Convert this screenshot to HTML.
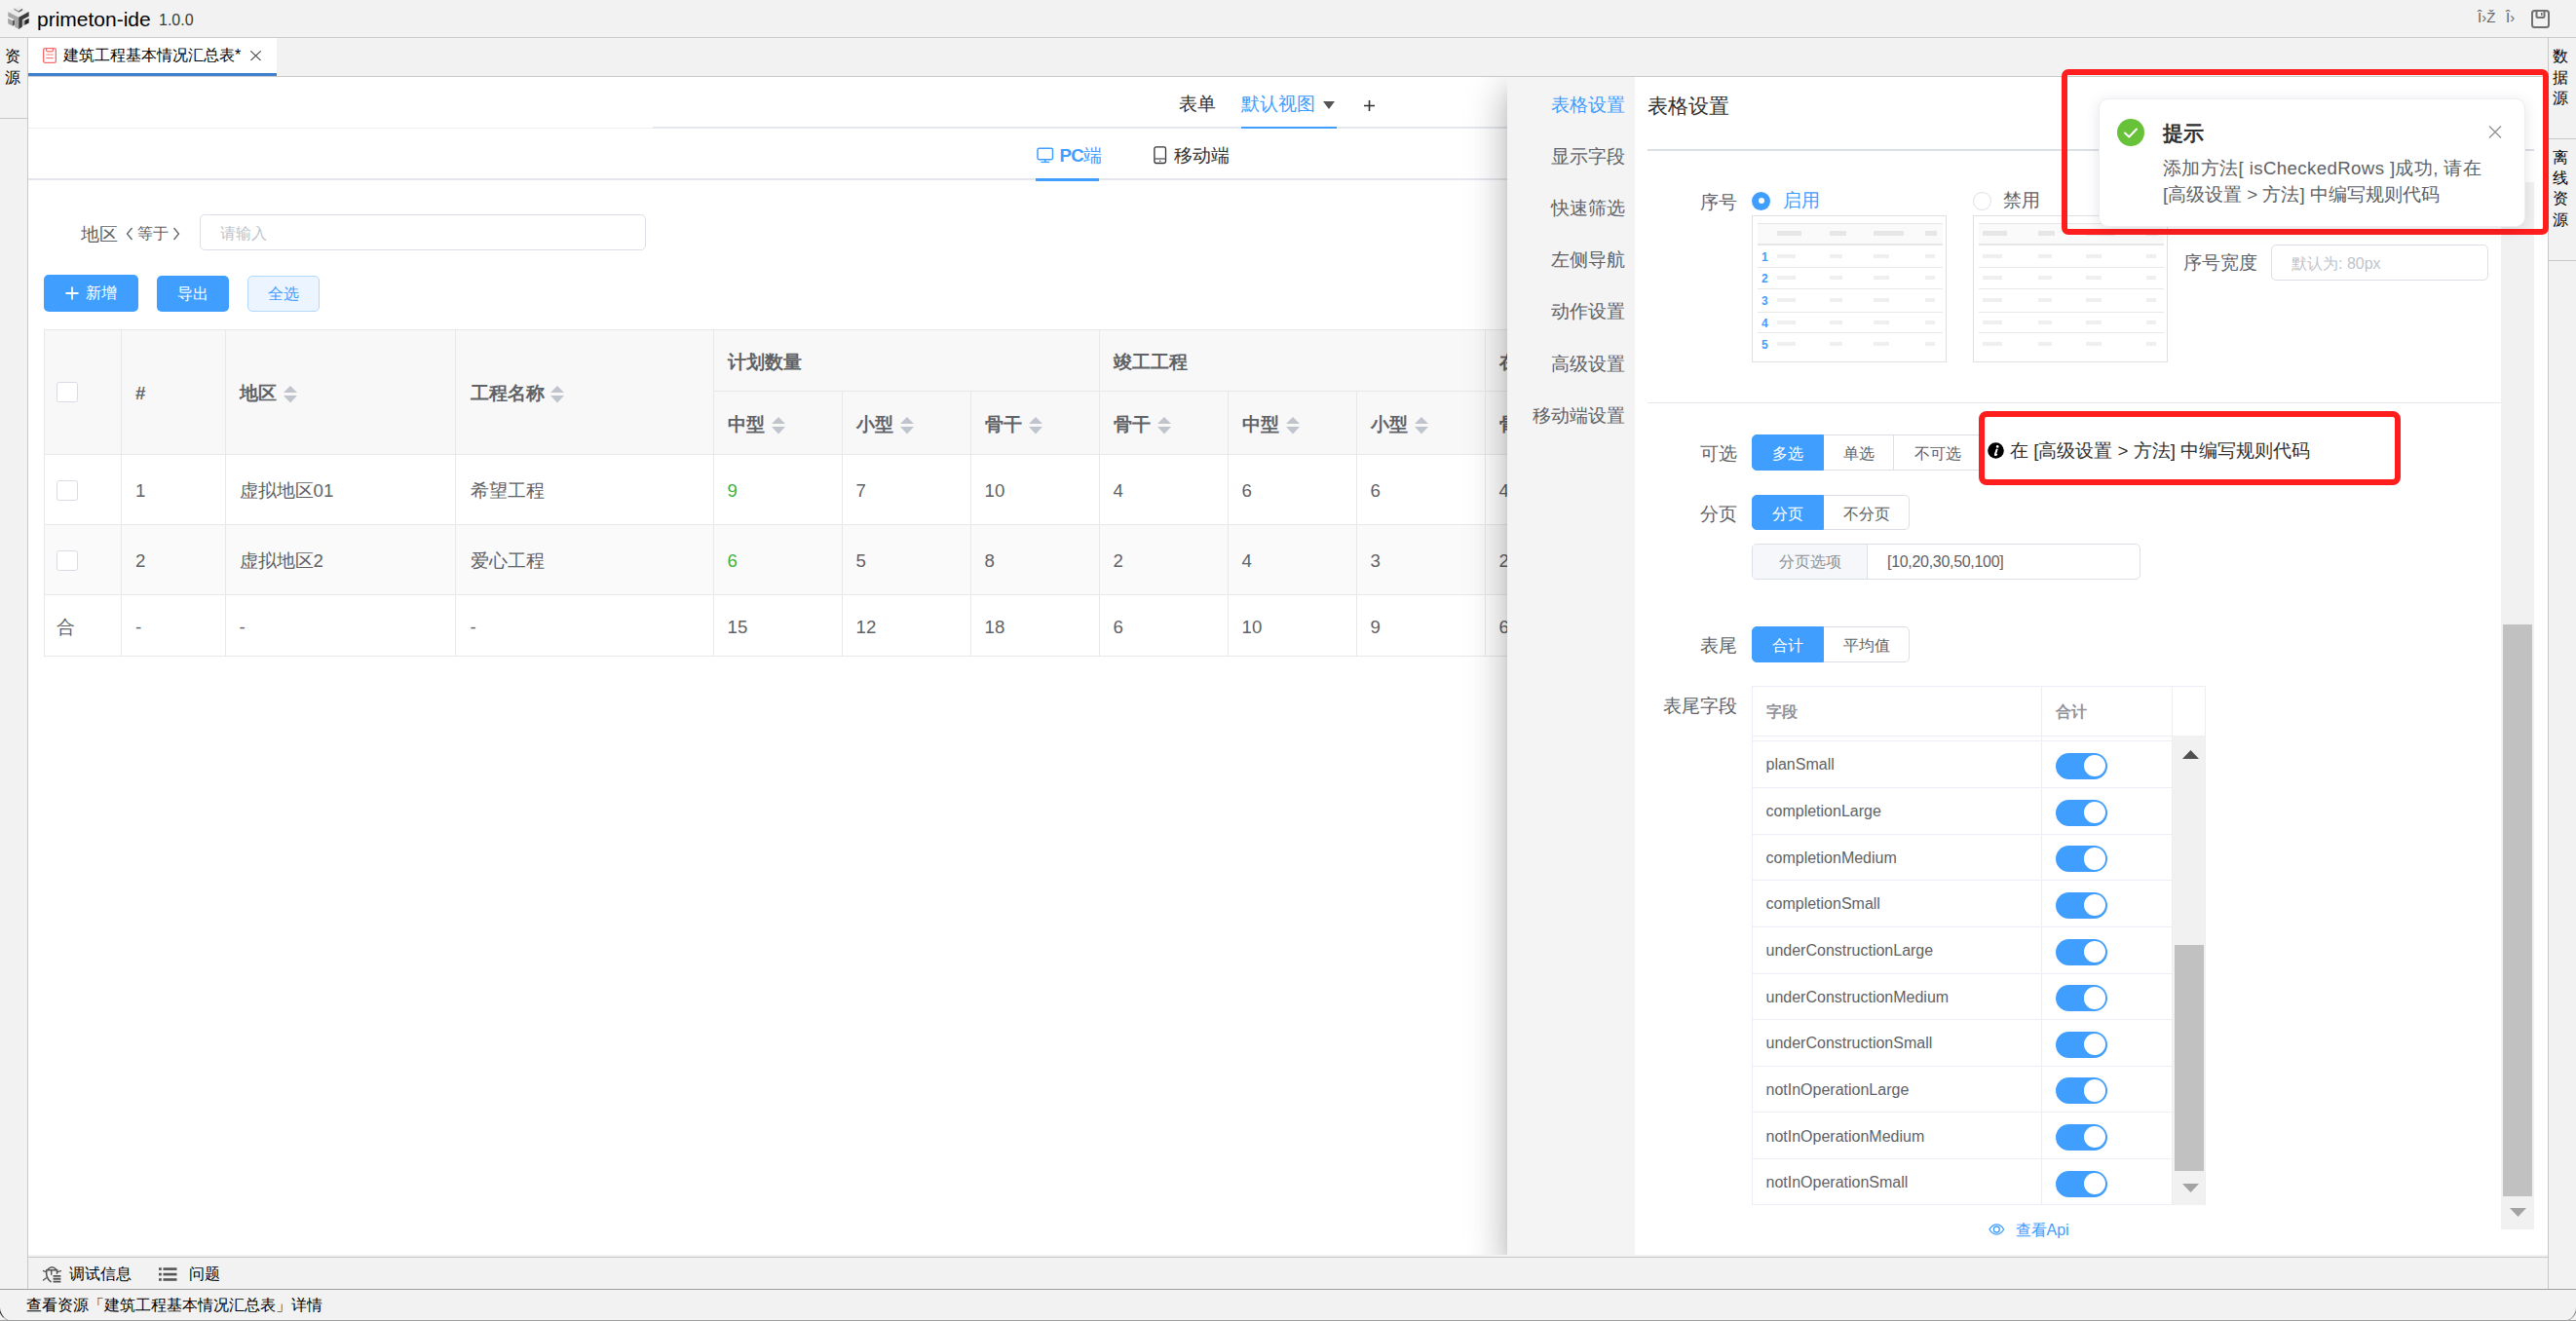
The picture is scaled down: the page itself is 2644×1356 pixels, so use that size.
<!DOCTYPE html><html><head><meta charset="utf-8"><title>primeton-ide</title><style>
*{box-sizing:border-box;margin:0;padding:0}
html,body{width:2644px;height:1356px;overflow:hidden}
body{position:relative;background:#f2f2f2;font-family:"Liberation Sans",sans-serif;color:#606266}
.ab{position:absolute}
.t{position:absolute;white-space:nowrap}
</style></head><body>
<div class="ab" style="left:0px;top:0px;width:2644px;height:38px;background:#f2f2f2"></div>
<div class="ab" style="left:0px;top:38px;width:2644px;height:1px;background:#cbcbcb"></div>
<svg class="ab" style="left:4px;top:4px" width="32" height="30" viewBox="0 0 1409 1321">
<polygon points="190,360 670,95 1130,350 670,610" fill="#ebebeb"/>
<polygon points="450,190 670,320 670,390 470,270" fill="#9a9a9a"/>
<polygon points="670,320 840,210 840,290 670,390" fill="#555"/>
<polygon points="190,360 670,610 670,1140 490,1040 490,720 190,570" fill="#a6a6a6"/>
<polygon points="185,650 400,760 400,1000 185,890" fill="#a3a3a3"/>
<polygon points="400,760 480,720 480,950 400,1000" fill="#4a4a4a"/>
<polygon points="670,610 1130,350 1130,560 830,720 830,1040 670,1140" fill="#3a3a3a"/>
<polygon points="850,700 940,750 940,960 850,1000" fill="#a8a8a8"/>
<polygon points="940,750 1130,650 1130,860 940,960" fill="#222"/>
</svg>
<div class="t" style="left:38px;top:3.8px;font-size:21px;line-height:32px;color:#000;font-weight:normal;">primeton-ide</div>
<div class="t" style="left:163px;top:9.3px;font-size:16px;line-height:24px;color:#3a3a3a;font-weight:normal;">1.0.0</div>
<div class="t" style="left:2543px;top:6.5px;font-size:15px;line-height:22px;color:#666;font-weight:normal;">Î›Ž</div>
<div class="t" style="left:2572px;top:6.5px;font-size:15px;line-height:22px;color:#666;font-weight:normal;">Î›</div>
<svg class="ab" style="left:2598px;top:10px" width="19" height="19" viewBox="0 0 19 19">
<rect x="1" y="1" width="17" height="17" rx="2.5" fill="none" stroke="#707070" stroke-width="2"/>
<path d="M5.5 1.5 V6.5 Q5.5 8 7 8 H12 Q13.5 8 13.5 6.5 V1.5" fill="none" stroke="#707070" stroke-width="2"/>
<rect x="10" y="3" width="1.5" height="3" fill="#707070"/>
</svg>
<div class="ab" style="left:28px;top:39px;width:1px;height:1284px;background:#c8c8c8"></div>
<div class="ab" style="left:0px;top:121px;width:28px;height:1px;background:#c8c8c8"></div>
<div class="t" style="left:5px;top:46.0px;font-size:16px;line-height:24px;color:#000;font-weight:normal;">资</div>
<div class="t" style="left:5px;top:67.5px;font-size:16px;line-height:24px;color:#000;font-weight:normal;">源</div>
<div class="ab" style="left:2615px;top:39px;width:1px;height:1284px;background:#c8c8c8"></div>
<div class="ab" style="left:2616px;top:142px;width:28px;height:1px;background:#c8c8c8"></div>
<div class="ab" style="left:2616px;top:267px;width:28px;height:1px;background:#c8c8c8"></div>
<div class="t" style="left:2620px;top:46.0px;font-size:16px;line-height:24px;color:#000;font-weight:normal;">数</div>
<div class="t" style="left:2620px;top:67.5px;font-size:16px;line-height:24px;color:#000;font-weight:normal;">据</div>
<div class="t" style="left:2620px;top:89.0px;font-size:16px;line-height:24px;color:#000;font-weight:normal;">源</div>
<div class="t" style="left:2620px;top:150.0px;font-size:16px;line-height:24px;color:#000;font-weight:normal;">离</div>
<div class="t" style="left:2620px;top:171.2px;font-size:16px;line-height:24px;color:#000;font-weight:normal;">线</div>
<div class="t" style="left:2620px;top:192.4px;font-size:16px;line-height:24px;color:#000;font-weight:normal;">资</div>
<div class="t" style="left:2620px;top:213.6px;font-size:16px;line-height:24px;color:#000;font-weight:normal;">源</div>
<div class="ab" style="left:29px;top:39px;width:2586px;height:40px;background:#f2f2f2"></div>
<div class="ab" style="left:29px;top:78px;width:2586px;height:1px;background:#c9c9c9"></div>
<div class="ab" style="left:29px;top:39px;width:255px;height:39px;background:#fff"></div>
<div class="ab" style="left:29px;top:75px;width:255px;height:3px;background:#3d80cf"></div>
<svg class="ab" style="left:44px;top:49px" width="14" height="16" viewBox="0 0 14 16">
<rect x="0.65" y="0.65" width="12.7" height="14.7" rx="1.6" fill="none" stroke="#f56c6c" stroke-width="1.3"/>
<path d="M3.6 0.8 V2.5 Q3.6 3.8 4.9 3.8 H9.1 Q10.4 3.8 10.4 2.5 V0.8" fill="none" stroke="#f56c6c" stroke-width="1.2"/>
<line x1="3.3" y1="7.1" x2="10.7" y2="7.1" stroke="#f89a9a" stroke-width="1.3"/>
<line x1="3.3" y1="10.6" x2="10.7" y2="10.6" stroke="#f56c6c" stroke-width="1.1"/>
</svg>
<div class="t" style="left:65px;top:44.5px;font-size:16px;line-height:24px;color:#000;font-weight:normal;">建筑工程基本情况汇总表*</div>
<svg class="ab" style="left:257px;top:51.5px" width="11" height="10.5" viewBox="0 0 11 10.5">
<path d="M0.3 0.3 L10.7 10.2 M10.7 0.3 L0.3 10.2" stroke="#444" stroke-width="1.05"/></svg>
<div class="ab" style="left:29px;top:79px;width:2586px;height:1209px;background:#fff"></div>
<div class="ab" style="left:29px;top:131px;width:641px;height:1px;background:#f3eef0"></div>
<div class="ab" style="left:670px;top:130px;width:877px;height:2px;background:#e4e7ed"></div>
<div class="t" style="left:1210px;top:93.3px;font-size:18.67px;line-height:28px;color:#303133;font-weight:normal;">表单</div>
<div class="t" style="left:1274px;top:93.3px;font-size:18.67px;line-height:28px;color:#409eff;font-weight:normal;">默认视图</div>
<svg class="ab" style="left:1358px;top:104px" width="12" height="8" viewBox="0 0 12 8"><polygon points="0,0 12,0 6,8" fill="#555"/></svg>
<svg class="ab" style="left:1400px;top:103px" width="11" height="11" viewBox="0 0 11 11"><path d="M5.5 0V11M0 5.5H11" stroke="#303133" stroke-width="1.6"/></svg>
<div class="ab" style="left:1274px;top:130px;width:98px;height:2px;background:#409eff"></div>
<div class="ab" style="left:29px;top:183px;width:1518px;height:2px;background:#e4e7ed"></div>
<div class="ab" style="left:1063px;top:183px;width:65px;height:3px;background:#409eff"></div>
<svg class="ab" style="left:1064px;top:151px" width="18" height="17" viewBox="0 0 18 17">
<rect x="1" y="1.3" width="15.5" height="11.4" rx="1.6" fill="none" stroke="#409eff" stroke-width="1.5"/>
<line x1="8.75" y1="12.7" x2="8.75" y2="15.3" stroke="#409eff" stroke-width="1.4"/>
<line x1="4.3" y1="15.4" x2="13.2" y2="15.4" stroke="#409eff" stroke-width="1.4"/></svg>
<div class="t" style="left:1087.5px;top:145.8px;font-size:18.67px;line-height:28px;color:#409eff;font-weight:normal;"><b style="letter-spacing:-0.6px">PC</b>端</div>
<svg class="ab" style="left:1184px;top:150px" width="14" height="19" viewBox="0 0 14 19">
<rect x="0.9" y="0.9" width="11.6" height="16.6" rx="1.8" fill="none" stroke="#303133" stroke-width="1.3"/>
<line x1="1" y1="13" x2="12.4" y2="13" stroke="#606266" stroke-width="1.4"/>
<circle cx="6.7" cy="15.3" r="0.75" fill="#303133"/></svg>
<div class="t" style="left:1205px;top:145.8px;font-size:18.67px;line-height:28px;color:#303133;font-weight:normal;">移动端</div>
<div class="t" style="left:83px;top:226.8px;font-size:18.67px;line-height:28px;color:#606266;font-weight:normal;">地区</div>
<svg class="ab" style="left:129px;top:233px" width="8" height="14" viewBox="0 0 8 14"><path d="M6.5 1 L1.5 7 L6.5 13" fill="none" stroke="#606266" stroke-width="1.3"/></svg>
<div class="t" style="left:141px;top:228.0px;font-size:16px;line-height:24px;color:#606266;font-weight:normal;">等于</div>
<svg class="ab" style="left:177px;top:233px" width="8" height="14" viewBox="0 0 8 14"><path d="M1.5 1 L6.5 7 L1.5 13" fill="none" stroke="#606266" stroke-width="1.3"/></svg>
<div class="ab" style="left:205px;top:220px;width:458px;height:37px;border:1px solid #dcdfe6;border-radius:5px;background:#fff"></div>
<div class="t" style="left:226px;top:227.5px;font-size:16px;line-height:24px;color:#c0c4cc;font-weight:normal;">请输入</div>
<div class="ab" style="left:45px;top:282px;width:97px;height:38px;background:#409eff;border-radius:5px"></div>
<svg class="ab" style="left:67px;top:294px" width="14" height="14" viewBox="0 0 14 14"><path d="M7 0.5V13.5M0.5 7H13.5" stroke="#fff" stroke-width="1.8"/></svg>
<div class="t" style="left:88px;top:289.0px;font-size:16px;line-height:24px;color:#fff;font-weight:normal;">新增</div>
<div class="ab" style="left:161px;top:283px;width:74px;height:37px;background:#409eff;border-radius:5px"></div>
<div class="t" style="left:182px;top:289.5px;font-size:16px;line-height:24px;color:#fff;font-weight:normal;">导出</div>
<div class="ab" style="left:254px;top:283px;width:74px;height:37px;background:#ecf5ff;border:1px solid #b3d8ff;border-radius:5px"></div>
<div class="t" style="left:275px;top:289.5px;font-size:16px;line-height:24px;color:#409eff;font-weight:normal;">全选</div>
<div class="ab" style="left:45px;top:338px;width:1502px;height:128px;background:#f8f8f8"></div>
<div class="ab" style="left:45px;top:538px;width:1502px;height:72px;background:#fafafa"></div>
<div class="ab" style="left:45px;top:338px;width:1502px;height:1px;background:#e8e8e8"></div>
<div class="ab" style="left:732px;top:401px;width:815px;height:1px;background:#e8e8e8"></div>
<div class="ab" style="left:45px;top:466px;width:1502px;height:1px;background:#e8e8e8"></div>
<div class="ab" style="left:45px;top:538px;width:1502px;height:1px;background:#e8e8e8"></div>
<div class="ab" style="left:45px;top:610px;width:1502px;height:1px;background:#e8e8e8"></div>
<div class="ab" style="left:45px;top:673px;width:1502px;height:1px;background:#e8e8e8"></div>
<div class="ab" style="left:45px;top:338px;width:1px;height:336px;background:#e8e8e8"></div>
<div class="ab" style="left:124px;top:338px;width:1px;height:336px;background:#e8e8e8"></div>
<div class="ab" style="left:231px;top:338px;width:1px;height:336px;background:#e8e8e8"></div>
<div class="ab" style="left:467px;top:338px;width:1px;height:336px;background:#e8e8e8"></div>
<div class="ab" style="left:732px;top:338px;width:1px;height:336px;background:#e8e8e8"></div>
<div class="ab" style="left:864px;top:401px;width:1px;height:273px;background:#e8e8e8"></div>
<div class="ab" style="left:996px;top:401px;width:1px;height:273px;background:#e8e8e8"></div>
<div class="ab" style="left:1260px;top:401px;width:1px;height:273px;background:#e8e8e8"></div>
<div class="ab" style="left:1392px;top:401px;width:1px;height:273px;background:#e8e8e8"></div>
<div class="ab" style="left:1128px;top:338px;width:1px;height:336px;background:#e8e8e8"></div>
<div class="ab" style="left:1524px;top:338px;width:1px;height:336px;background:#e8e8e8"></div>
<div class="ab" style="left:58px;top:392px;width:21.5px;height:20.8px;border:1.8px solid #d9dce3;border-radius:2.5px;background:#fff"></div>
<div class="t" style="left:139px;top:390.3px;font-size:18.67px;line-height:28px;color:#606266;font-weight:bold;">#</div>
<div class="t" style="left:245.5px;top:390.3px;font-size:18.67px;line-height:28px;color:#606266;font-weight:bold;">地区</div>
<svg class="ab" style="left:291px;top:396px" width="14" height="18" viewBox="0 0 14 18"><polygon points="7,0 14,7 0,7" fill="#c0c4cc"/><polygon points="0,10 14,10 7,17.5" fill="#c0c4cc"/></svg>
<div class="t" style="left:482.5px;top:390.3px;font-size:18.67px;line-height:28px;color:#606266;font-weight:bold;">工程名称</div>
<svg class="ab" style="left:565px;top:396px" width="14" height="18" viewBox="0 0 14 18"><polygon points="7,0 14,7 0,7" fill="#c0c4cc"/><polygon points="0,10 14,10 7,17.5" fill="#c0c4cc"/></svg>
<div class="t" style="left:746.5px;top:357.8px;font-size:18.67px;line-height:28px;color:#606266;font-weight:bold;">计划数量</div>
<div class="t" style="left:1142.5px;top:357.8px;font-size:18.67px;line-height:28px;color:#606266;font-weight:bold;">竣工工程</div>
<div class="t" style="left:1538.5px;top:357.8px;font-size:18.67px;line-height:28px;color:#606266;font-weight:bold;">在建工程</div>
<div class="t" style="left:746.5px;top:422.3px;font-size:18.67px;line-height:28px;color:#606266;font-weight:bold;">中型</div>
<svg class="ab" style="left:792px;top:428px" width="14" height="18" viewBox="0 0 14 18"><polygon points="7,0 14,7 0,7" fill="#c0c4cc"/><polygon points="0,10 14,10 7,17.5" fill="#c0c4cc"/></svg>
<div class="t" style="left:878.5px;top:422.3px;font-size:18.67px;line-height:28px;color:#606266;font-weight:bold;">小型</div>
<svg class="ab" style="left:924px;top:428px" width="14" height="18" viewBox="0 0 14 18"><polygon points="7,0 14,7 0,7" fill="#c0c4cc"/><polygon points="0,10 14,10 7,17.5" fill="#c0c4cc"/></svg>
<div class="t" style="left:1010.5px;top:422.3px;font-size:18.67px;line-height:28px;color:#606266;font-weight:bold;">骨干</div>
<svg class="ab" style="left:1056px;top:428px" width="14" height="18" viewBox="0 0 14 18"><polygon points="7,0 14,7 0,7" fill="#c0c4cc"/><polygon points="0,10 14,10 7,17.5" fill="#c0c4cc"/></svg>
<div class="t" style="left:1142.5px;top:422.3px;font-size:18.67px;line-height:28px;color:#606266;font-weight:bold;">骨干</div>
<svg class="ab" style="left:1188px;top:428px" width="14" height="18" viewBox="0 0 14 18"><polygon points="7,0 14,7 0,7" fill="#c0c4cc"/><polygon points="0,10 14,10 7,17.5" fill="#c0c4cc"/></svg>
<div class="t" style="left:1274.5px;top:422.3px;font-size:18.67px;line-height:28px;color:#606266;font-weight:bold;">中型</div>
<svg class="ab" style="left:1320px;top:428px" width="14" height="18" viewBox="0 0 14 18"><polygon points="7,0 14,7 0,7" fill="#c0c4cc"/><polygon points="0,10 14,10 7,17.5" fill="#c0c4cc"/></svg>
<div class="t" style="left:1406.5px;top:422.3px;font-size:18.67px;line-height:28px;color:#606266;font-weight:bold;">小型</div>
<svg class="ab" style="left:1452px;top:428px" width="14" height="18" viewBox="0 0 14 18"><polygon points="7,0 14,7 0,7" fill="#c0c4cc"/><polygon points="0,10 14,10 7,17.5" fill="#c0c4cc"/></svg>
<div class="t" style="left:1538.5px;top:422.3px;font-size:18.67px;line-height:28px;color:#606266;font-weight:bold;">骨干</div>
<svg class="ab" style="left:1584px;top:428px" width="14" height="18" viewBox="0 0 14 18"><polygon points="7,0 14,7 0,7" fill="#c0c4cc"/><polygon points="0,10 14,10 7,17.5" fill="#c0c4cc"/></svg>
<div class="ab" style="left:58px;top:493px;width:21.5px;height:20.8px;border:1.8px solid #d9dce3;border-radius:2.5px;background:#fff"></div>
<div class="t" style="left:139px;top:490.0px;font-size:18.67px;line-height:28px;color:#606266;font-weight:normal;">1</div>
<div class="t" style="left:245.5px;top:490.0px;font-size:18.67px;line-height:28px;color:#606266;font-weight:normal;">虚拟地区01</div>
<div class="t" style="left:482.5px;top:490.0px;font-size:18.67px;line-height:28px;color:#606266;font-weight:normal;">希望工程</div>
<div class="t" style="left:746.5px;top:490.0px;font-size:18.67px;line-height:28px;color:#3eb33e;font-weight:normal;">9</div>
<div class="t" style="left:878.5px;top:490.0px;font-size:18.67px;line-height:28px;color:#606266;font-weight:normal;">7</div>
<div class="t" style="left:1010.5px;top:490.0px;font-size:18.67px;line-height:28px;color:#606266;font-weight:normal;">10</div>
<div class="t" style="left:1142.5px;top:490.0px;font-size:18.67px;line-height:28px;color:#606266;font-weight:normal;">4</div>
<div class="t" style="left:1274.5px;top:490.0px;font-size:18.67px;line-height:28px;color:#606266;font-weight:normal;">6</div>
<div class="t" style="left:1406.5px;top:490.0px;font-size:18.67px;line-height:28px;color:#606266;font-weight:normal;">6</div>
<div class="t" style="left:1538.5px;top:490.0px;font-size:18.67px;line-height:28px;color:#606266;font-weight:normal;">4</div>
<div class="ab" style="left:58px;top:565px;width:21.5px;height:20.8px;border:1.8px solid #d9dce3;border-radius:2.5px;background:#fff"></div>
<div class="t" style="left:139px;top:562.0px;font-size:18.67px;line-height:28px;color:#606266;font-weight:normal;">2</div>
<div class="t" style="left:245.5px;top:562.0px;font-size:18.67px;line-height:28px;color:#606266;font-weight:normal;">虚拟地区2</div>
<div class="t" style="left:482.5px;top:562.0px;font-size:18.67px;line-height:28px;color:#606266;font-weight:normal;">爱心工程</div>
<div class="t" style="left:746.5px;top:562.0px;font-size:18.67px;line-height:28px;color:#3eb33e;font-weight:normal;">6</div>
<div class="t" style="left:878.5px;top:562.0px;font-size:18.67px;line-height:28px;color:#606266;font-weight:normal;">5</div>
<div class="t" style="left:1010.5px;top:562.0px;font-size:18.67px;line-height:28px;color:#606266;font-weight:normal;">8</div>
<div class="t" style="left:1142.5px;top:562.0px;font-size:18.67px;line-height:28px;color:#606266;font-weight:normal;">2</div>
<div class="t" style="left:1274.5px;top:562.0px;font-size:18.67px;line-height:28px;color:#606266;font-weight:normal;">4</div>
<div class="t" style="left:1406.5px;top:562.0px;font-size:18.67px;line-height:28px;color:#606266;font-weight:normal;">3</div>
<div class="t" style="left:1538.5px;top:562.0px;font-size:18.67px;line-height:28px;color:#606266;font-weight:normal;">2</div>
<div class="t" style="left:58px;top:630.0px;font-size:18.67px;line-height:28px;color:#606266;font-weight:normal;">合</div>
<div class="t" style="left:139px;top:630.0px;font-size:18.67px;line-height:28px;color:#606266;font-weight:normal;">-</div>
<div class="t" style="left:245.5px;top:630.0px;font-size:18.67px;line-height:28px;color:#606266;font-weight:normal;">-</div>
<div class="t" style="left:482.5px;top:630.0px;font-size:18.67px;line-height:28px;color:#606266;font-weight:normal;">-</div>
<div class="t" style="left:746.5px;top:630.0px;font-size:18.67px;line-height:28px;color:#606266;font-weight:normal;">15</div>
<div class="t" style="left:878.5px;top:630.0px;font-size:18.67px;line-height:28px;color:#606266;font-weight:normal;">12</div>
<div class="t" style="left:1010.5px;top:630.0px;font-size:18.67px;line-height:28px;color:#606266;font-weight:normal;">18</div>
<div class="t" style="left:1142.5px;top:630.0px;font-size:18.67px;line-height:28px;color:#606266;font-weight:normal;">6</div>
<div class="t" style="left:1274.5px;top:630.0px;font-size:18.67px;line-height:28px;color:#606266;font-weight:normal;">10</div>
<div class="t" style="left:1406.5px;top:630.0px;font-size:18.67px;line-height:28px;color:#606266;font-weight:normal;">9</div>
<div class="t" style="left:1538.5px;top:630.0px;font-size:18.67px;line-height:28px;color:#606266;font-weight:normal;">6</div>
<div class="ab" style="left:1547px;top:79px;width:1068px;height:1209px;background:#fff;box-shadow:0 10px 14px -7px rgba(0,0,0,.2),0 21px 32px 3px rgba(0,0,0,.14),0 8px 40px 7px rgba(0,0,0,.12);clip-path:inset(0 0 0 -120px)"></div>
<div class="ab" style="left:1547px;top:79px;width:131px;height:1209px;background:#f4f4f5"></div>
<div class="t" style="left:1547px;width:121px;text-align:right;top:93.5px;font-size:18.67px;line-height:28px;color:#409eff">表格设置</div>
<div class="t" style="left:1547px;width:121px;text-align:right;top:146.8px;font-size:18.67px;line-height:28px;color:#606266">显示字段</div>
<div class="t" style="left:1547px;width:121px;text-align:right;top:200.0px;font-size:18.67px;line-height:28px;color:#606266">快速筛选</div>
<div class="t" style="left:1547px;width:121px;text-align:right;top:253.2px;font-size:18.67px;line-height:28px;color:#606266">左侧导航</div>
<div class="t" style="left:1547px;width:121px;text-align:right;top:306.4px;font-size:18.67px;line-height:28px;color:#606266">动作设置</div>
<div class="t" style="left:1547px;width:121px;text-align:right;top:359.6px;font-size:18.67px;line-height:28px;color:#606266">高级设置</div>
<div class="t" style="left:1547px;width:121px;text-align:right;top:412.8px;font-size:18.67px;line-height:28px;color:#606266">移动端设置</div>
<div class="t" style="left:1691px;top:93.0px;font-size:21.33px;line-height:32px;color:#303133;font-weight:normal;">表格设置</div>
<div class="ab" style="left:1691px;top:153px;width:910px;height:2px;background:#dcdfe6"></div>
<div class="ab" style="left:2567px;top:187px;width:34px;height:1075px;background:#f1f1f1"></div>
<div class="ab" style="left:2569px;top:641px;width:30px;height:587px;background:#c1c1c1"></div>
<svg class="ab" style="left:2576px;top:1240px" width="17" height="9" viewBox="0 0 17 9"><polygon points="0,0 17,0 8.5,9" fill="#a3a3a3"/></svg>
<div class="t" style="left:1744.5px;top:194.3px;font-size:18.67px;line-height:28px;color:#606266;font-weight:normal;">序号</div>
<div class="ab" style="left:1798px;top:196.5px;width:19px;height:19px;border-radius:50%;background:#409eff"></div>
<div class="ab" style="left:1804.5px;top:203px;width:6px;height:6px;border-radius:50%;background:#fff"></div>
<div class="t" style="left:1830px;top:192.2px;font-size:18.67px;line-height:28px;color:#409eff;font-weight:normal;">启用</div>
<div class="ab" style="left:2025px;top:196.5px;width:19px;height:19px;border-radius:50%;background:#fff;border:1px solid #dcdfe6"></div>
<div class="t" style="left:2056px;top:192.2px;font-size:18.67px;line-height:28px;color:#606266;font-weight:normal;">禁用</div>
<div class="ab" style="left:1798px;top:221px;width:200px;height:151px;border:1px solid #e0e0e0;background:#fff"></div>
<div class="ab" style="left:1804px;top:229px;width:190px;height:22px;background:#fafafa"></div>
<div class="ab" style="left:1804px;top:229px;width:190px;height:1px;background:#e6e6e6"></div>
<div class="ab" style="left:1804px;top:250px;width:190px;height:2px;background:#e6e6e6"></div>
<div class="ab" style="left:1804px;top:274px;width:190px;height:1px;background:#e8e8e8"></div>
<div class="ab" style="left:1804px;top:296px;width:190px;height:1px;background:#e8e8e8"></div>
<div class="ab" style="left:1804px;top:320px;width:190px;height:1px;background:#e8e8e8"></div>
<div class="ab" style="left:1804px;top:341px;width:190px;height:1px;background:#e8e8e8"></div>
<div class="ab" style="left:1824px;top:237px;width:25px;height:5px;background:#e6e6e6"></div>
<div class="ab" style="left:1877.5px;top:237px;width:17px;height:5px;background:#e6e6e6"></div>
<div class="ab" style="left:1923px;top:237px;width:31px;height:5px;background:#e6e6e6"></div>
<div class="ab" style="left:1976px;top:237px;width:12px;height:5px;background:#e6e6e6"></div>
<div class="ab" style="left:1824px;top:261px;width:19px;height:4px;background:#efefef"></div>
<div class="ab" style="left:1877.5px;top:261px;width:13.5px;height:4px;background:#efefef"></div>
<div class="ab" style="left:1923px;top:261px;width:16px;height:4px;background:#efefef"></div>
<div class="ab" style="left:1976px;top:261px;width:9.5px;height:4px;background:#efefef"></div>
<div class="t" style="left:1808px;top:254.5px;font-size:12px;line-height:18px;color:#409eff;font-weight:bold;">1</div>
<div class="ab" style="left:1824px;top:283px;width:19px;height:4px;background:#efefef"></div>
<div class="ab" style="left:1877.5px;top:283px;width:13.5px;height:4px;background:#efefef"></div>
<div class="ab" style="left:1923px;top:283px;width:16px;height:4px;background:#efefef"></div>
<div class="ab" style="left:1976px;top:283px;width:9.5px;height:4px;background:#efefef"></div>
<div class="t" style="left:1808px;top:277.2px;font-size:12px;line-height:18px;color:#409eff;font-weight:bold;">2</div>
<div class="ab" style="left:1824px;top:306px;width:19px;height:4px;background:#efefef"></div>
<div class="ab" style="left:1877.5px;top:306px;width:13.5px;height:4px;background:#efefef"></div>
<div class="ab" style="left:1923px;top:306px;width:16px;height:4px;background:#efefef"></div>
<div class="ab" style="left:1976px;top:306px;width:9.5px;height:4px;background:#efefef"></div>
<div class="t" style="left:1808px;top:300.0px;font-size:12px;line-height:18px;color:#409eff;font-weight:bold;">3</div>
<div class="ab" style="left:1824px;top:329px;width:19px;height:4px;background:#efefef"></div>
<div class="ab" style="left:1877.5px;top:329px;width:13.5px;height:4px;background:#efefef"></div>
<div class="ab" style="left:1923px;top:329px;width:16px;height:4px;background:#efefef"></div>
<div class="ab" style="left:1976px;top:329px;width:9.5px;height:4px;background:#efefef"></div>
<div class="t" style="left:1808px;top:322.5px;font-size:12px;line-height:18px;color:#409eff;font-weight:bold;">4</div>
<div class="ab" style="left:1824px;top:351px;width:19px;height:4px;background:#efefef"></div>
<div class="ab" style="left:1877.5px;top:351px;width:13.5px;height:4px;background:#efefef"></div>
<div class="ab" style="left:1923px;top:351px;width:16px;height:4px;background:#efefef"></div>
<div class="ab" style="left:1976px;top:351px;width:9.5px;height:4px;background:#efefef"></div>
<div class="t" style="left:1808px;top:345.2px;font-size:12px;line-height:18px;color:#409eff;font-weight:bold;">5</div>
<div class="ab" style="left:2025px;top:221px;width:200px;height:151px;border:1px solid #e0e0e0;background:#fff"></div>
<div class="ab" style="left:2031px;top:229px;width:190px;height:22px;background:#fafafa"></div>
<div class="ab" style="left:2031px;top:229px;width:190px;height:1px;background:#e6e6e6"></div>
<div class="ab" style="left:2031px;top:250px;width:190px;height:2px;background:#e6e6e6"></div>
<div class="ab" style="left:2031px;top:274px;width:190px;height:1px;background:#e8e8e8"></div>
<div class="ab" style="left:2031px;top:296px;width:190px;height:1px;background:#e8e8e8"></div>
<div class="ab" style="left:2031px;top:320px;width:190px;height:1px;background:#e8e8e8"></div>
<div class="ab" style="left:2031px;top:341px;width:190px;height:1px;background:#e8e8e8"></div>
<div class="ab" style="left:2035px;top:237px;width:25px;height:5px;background:#e6e6e6"></div>
<div class="ab" style="left:2092px;top:237px;width:17px;height:5px;background:#e6e6e6"></div>
<div class="ab" style="left:2141px;top:237px;width:30px;height:5px;background:#e6e6e6"></div>
<div class="ab" style="left:2203px;top:237px;width:12px;height:5px;background:#e6e6e6"></div>
<div class="ab" style="left:2035px;top:261px;width:19.5px;height:4px;background:#efefef"></div>
<div class="ab" style="left:2092px;top:261px;width:13.75px;height:4px;background:#efefef"></div>
<div class="ab" style="left:2141px;top:261px;width:15.75px;height:4px;background:#efefef"></div>
<div class="ab" style="left:2203px;top:261px;width:9.5px;height:4px;background:#efefef"></div>
<div class="ab" style="left:2035px;top:283px;width:19.5px;height:4px;background:#efefef"></div>
<div class="ab" style="left:2092px;top:283px;width:13.75px;height:4px;background:#efefef"></div>
<div class="ab" style="left:2141px;top:283px;width:15.75px;height:4px;background:#efefef"></div>
<div class="ab" style="left:2203px;top:283px;width:9.5px;height:4px;background:#efefef"></div>
<div class="ab" style="left:2035px;top:306px;width:19.5px;height:4px;background:#efefef"></div>
<div class="ab" style="left:2092px;top:306px;width:13.75px;height:4px;background:#efefef"></div>
<div class="ab" style="left:2141px;top:306px;width:15.75px;height:4px;background:#efefef"></div>
<div class="ab" style="left:2203px;top:306px;width:9.5px;height:4px;background:#efefef"></div>
<div class="ab" style="left:2035px;top:329px;width:19.5px;height:4px;background:#efefef"></div>
<div class="ab" style="left:2092px;top:329px;width:13.75px;height:4px;background:#efefef"></div>
<div class="ab" style="left:2141px;top:329px;width:15.75px;height:4px;background:#efefef"></div>
<div class="ab" style="left:2203px;top:329px;width:9.5px;height:4px;background:#efefef"></div>
<div class="ab" style="left:2035px;top:351px;width:19.5px;height:4px;background:#efefef"></div>
<div class="ab" style="left:2092px;top:351px;width:13.75px;height:4px;background:#efefef"></div>
<div class="ab" style="left:2141px;top:351px;width:15.75px;height:4px;background:#efefef"></div>
<div class="ab" style="left:2203px;top:351px;width:9.5px;height:4px;background:#efefef"></div>
<div class="t" style="left:2240.5px;top:256.3px;font-size:18.67px;line-height:28px;color:#606266;font-weight:normal;">序号宽度</div>
<div class="ab" style="left:2331px;top:250.5px;width:223px;height:37px;border:1px solid #dcdfe6;border-radius:5px;background:#fff"></div>
<div class="t" style="left:2352px;top:258.5px;font-size:16px;line-height:24px;color:#c0c4cc;font-weight:normal;">默认为: 80px</div>
<div class="ab" style="left:1691px;top:413px;width:876px;height:1px;background:#e4e7ed"></div>
<div class="t" style="left:1745px;top:451.8px;font-size:18.67px;line-height:28px;color:#606266;font-weight:normal;">可选</div>
<div class="ab" style="left:1798px;top:446px;width:74px;height:36.5px;background:#409eff;border:1px solid #409eff;border-radius:5px 0 0 5px;"></div>
<div class="t" style="left:1798px;width:74px;text-align:center;top:447.5px;height:36.5px;line-height:36.5px;font-size:16px;color:#fff">多选</div>
<div class="ab" style="left:1872px;top:446px;width:72px;height:36.5px;background:#fff;border:1px solid #dcdfe6;border-left:none;"></div>
<div class="t" style="left:1872px;width:72px;text-align:center;top:447.5px;height:36.5px;line-height:36.5px;font-size:16px;color:#606266">单选</div>
<div class="ab" style="left:1944px;top:446px;width:90px;height:36.5px;background:#fff;border:1px solid #dcdfe6;border-left:none;border-radius:0 5px 5px 0;"></div>
<div class="t" style="left:1944px;width:90px;text-align:center;top:447.5px;height:36.5px;line-height:36.5px;font-size:16px;color:#606266">不可选</div>
<div class="t" style="left:1745px;top:513.8px;font-size:18.67px;line-height:28px;color:#606266;font-weight:normal;">分页</div>
<div class="ab" style="left:1798px;top:508px;width:74px;height:35.5px;background:#409eff;border:1px solid #409eff;border-radius:5px 0 0 5px;"></div>
<div class="t" style="left:1798px;width:74px;text-align:center;top:509.5px;height:35.5px;line-height:35.5px;font-size:16px;color:#fff">分页</div>
<div class="ab" style="left:1872px;top:508px;width:88px;height:35.5px;background:#fff;border:1px solid #dcdfe6;border-left:none;border-radius:0 5px 5px 0;"></div>
<div class="t" style="left:1872px;width:88px;text-align:center;top:509.5px;height:35.5px;line-height:35.5px;font-size:16px;color:#606266">不分页</div>
<div class="ab" style="left:1798px;top:558px;width:399px;height:36.5px;border:1px solid #dcdfe6;border-radius:5px;background:#fff"></div>
<div class="ab" style="left:1799px;top:559px;width:118px;height:34.5px;background:#f5f7fa;border-right:1px solid #dcdfe6;border-radius:4px 0 0 4px"></div>
<div class="t" style="left:1826px;top:564.5px;font-size:16px;line-height:24px;color:#909399;font-weight:normal;">分页选项</div>
<div class="t" style="left:1937px;top:564.5px;font-size:16px;line-height:24px;color:#606266;font-weight:normal;letter-spacing:-0.3px">[10,20,30,50,100]</div>
<div class="t" style="left:1745px;top:648.8px;font-size:18.67px;line-height:28px;color:#606266;font-weight:normal;">表尾</div>
<div class="ab" style="left:1798px;top:643px;width:74px;height:36.5px;background:#409eff;border:1px solid #409eff;border-radius:5px 0 0 5px;"></div>
<div class="t" style="left:1798px;width:74px;text-align:center;top:644.5px;height:36.5px;line-height:36.5px;font-size:16px;color:#fff">合计</div>
<div class="ab" style="left:1872px;top:643px;width:88px;height:36.5px;background:#fff;border:1px solid #dcdfe6;border-left:none;border-radius:0 5px 5px 0;"></div>
<div class="t" style="left:1872px;width:88px;text-align:center;top:644.5px;height:36.5px;line-height:36.5px;font-size:16px;color:#606266">平均值</div>
<div class="t" style="left:1707px;top:710.8px;font-size:18.67px;line-height:28px;color:#606266;font-weight:normal;">表尾字段</div>
<div class="ab" style="left:1798px;top:704px;width:466px;height:533px;border:1px solid #ebeef5;background:#fff"></div>
<div class="ab" style="left:1799px;top:755px;width:430px;height:1px;background:#ebeef5"></div>
<div class="ab" style="left:1799px;top:760px;width:430px;height:1px;background:#ebeef5"></div>
<div class="ab" style="left:2095px;top:705px;width:1px;height:532px;background:#ebeef5"></div>
<div class="ab" style="left:2229px;top:705px;width:1px;height:532px;background:#ebeef5"></div>
<div class="t" style="left:1812.75px;top:719.0px;font-size:16px;line-height:24px;color:#909399;font-weight:bold;">字段</div>
<div class="t" style="left:2110px;top:719.0px;font-size:16px;line-height:24px;color:#909399;font-weight:bold;">合计</div>
<div class="t" style="left:1812.5px;top:773.0px;font-size:16px;line-height:24px;color:#606266;font-weight:normal;">planSmall</div>
<div class="ab" style="left:2110px;top:772.5px;width:53px;height:27px;border-radius:13.5px;background:#409eff"></div>
<div class="ab" style="left:2138.7px;top:774.5px;width:22.4px;height:22.4px;border-radius:50%;background:#fff"></div>
<div class="ab" style="left:1799px;top:808px;width:430px;height:1px;background:#ebeef5"></div>
<div class="t" style="left:1812.5px;top:821.0px;font-size:16px;line-height:24px;color:#606266;font-weight:normal;">completionLarge</div>
<div class="ab" style="left:2110px;top:820.5px;width:53px;height:27px;border-radius:13.5px;background:#409eff"></div>
<div class="ab" style="left:2138.7px;top:822.5px;width:22.4px;height:22.4px;border-radius:50%;background:#fff"></div>
<div class="ab" style="left:1799px;top:856px;width:430px;height:1px;background:#ebeef5"></div>
<div class="t" style="left:1812.5px;top:868.8px;font-size:16px;line-height:24px;color:#606266;font-weight:normal;">completionMedium</div>
<div class="ab" style="left:2110px;top:868.2px;width:53px;height:27px;border-radius:13.5px;background:#409eff"></div>
<div class="ab" style="left:2138.7px;top:870.2px;width:22.4px;height:22.4px;border-radius:50%;background:#fff"></div>
<div class="ab" style="left:1799px;top:903px;width:430px;height:1px;background:#ebeef5"></div>
<div class="t" style="left:1812.5px;top:916.2px;font-size:16px;line-height:24px;color:#606266;font-weight:normal;">completionSmall</div>
<div class="ab" style="left:2110px;top:915.8px;width:53px;height:27px;border-radius:13.5px;background:#409eff"></div>
<div class="ab" style="left:2138.7px;top:917.8px;width:22.4px;height:22.4px;border-radius:50%;background:#fff"></div>
<div class="ab" style="left:1799px;top:951px;width:430px;height:1px;background:#ebeef5"></div>
<div class="t" style="left:1812.5px;top:964.0px;font-size:16px;line-height:24px;color:#606266;font-weight:normal;">underConstructionLarge</div>
<div class="ab" style="left:2110px;top:963.5px;width:53px;height:27px;border-radius:13.5px;background:#409eff"></div>
<div class="ab" style="left:2138.7px;top:965.5px;width:22.4px;height:22.4px;border-radius:50%;background:#fff"></div>
<div class="ab" style="left:1799px;top:999px;width:430px;height:1px;background:#ebeef5"></div>
<div class="t" style="left:1812.5px;top:1011.8px;font-size:16px;line-height:24px;color:#606266;font-weight:normal;">underConstructionMedium</div>
<div class="ab" style="left:2110px;top:1011.2px;width:53px;height:27px;border-radius:13.5px;background:#409eff"></div>
<div class="ab" style="left:2138.7px;top:1013.2px;width:22.4px;height:22.4px;border-radius:50%;background:#fff"></div>
<div class="ab" style="left:1799px;top:1046px;width:430px;height:1px;background:#ebeef5"></div>
<div class="t" style="left:1812.5px;top:1059.2px;font-size:16px;line-height:24px;color:#606266;font-weight:normal;">underConstructionSmall</div>
<div class="ab" style="left:2110px;top:1058.8px;width:53px;height:27px;border-radius:13.5px;background:#409eff"></div>
<div class="ab" style="left:2138.7px;top:1060.8px;width:22.4px;height:22.4px;border-radius:50%;background:#fff"></div>
<div class="ab" style="left:1799px;top:1094px;width:430px;height:1px;background:#ebeef5"></div>
<div class="t" style="left:1812.5px;top:1106.8px;font-size:16px;line-height:24px;color:#606266;font-weight:normal;">notInOperationLarge</div>
<div class="ab" style="left:2110px;top:1106.2px;width:53px;height:27px;border-radius:13.5px;background:#409eff"></div>
<div class="ab" style="left:2138.7px;top:1108.2px;width:22.4px;height:22.4px;border-radius:50%;background:#fff"></div>
<div class="ab" style="left:1799px;top:1141px;width:430px;height:1px;background:#ebeef5"></div>
<div class="t" style="left:1812.5px;top:1154.5px;font-size:16px;line-height:24px;color:#606266;font-weight:normal;">notInOperationMedium</div>
<div class="ab" style="left:2110px;top:1154.0px;width:53px;height:27px;border-radius:13.5px;background:#409eff"></div>
<div class="ab" style="left:2138.7px;top:1156.0px;width:22.4px;height:22.4px;border-radius:50%;background:#fff"></div>
<div class="ab" style="left:1799px;top:1189px;width:430px;height:1px;background:#ebeef5"></div>
<div class="t" style="left:1812.5px;top:1202.2px;font-size:16px;line-height:24px;color:#606266;font-weight:normal;">notInOperationSmall</div>
<div class="ab" style="left:2110px;top:1201.8px;width:53px;height:27px;border-radius:13.5px;background:#409eff"></div>
<div class="ab" style="left:2138.7px;top:1203.8px;width:22.4px;height:22.4px;border-radius:50%;background:#fff"></div>
<div class="ab" style="left:2230px;top:755px;width:33px;height:482px;background:#f1f1f1"></div>
<div class="ab" style="left:2232px;top:970px;width:30px;height:232px;background:#c1c1c1"></div>
<svg class="ab" style="left:2240px;top:770px" width="17" height="9" viewBox="0 0 17 9"><polygon points="0,9 17,9 8.5,0" fill="#505050"/></svg>
<svg class="ab" style="left:2240px;top:1215px" width="17" height="9" viewBox="0 0 17 9"><polygon points="0,0 17,0 8.5,9" fill="#a3a3a3"/></svg>
<svg class="ab" style="left:2041px;top:1256px" width="17" height="12" viewBox="0 0 17 12">
<path d="M0.9 6 Q4.2 0.9 8.3 0.9 Q12.4 0.9 15.7 6 Q12.4 11.1 8.3 11.1 Q4.2 11.1 0.9 6Z" fill="none" stroke="#409eff" stroke-width="1.3"/>
<circle cx="8.3" cy="6" r="3" fill="none" stroke="#409eff" stroke-width="1.3"/></svg>
<div class="t" style="left:2068.5px;top:1250.5px;font-size:16px;line-height:24px;color:#409eff;font-weight:normal;">查看Api</div>
<div class="ab" style="left:2030.5px;top:421.5px;width:433px;height:76.5px;background:#fff;border:6px solid #ff1e1e;border-radius:8px"></div>
<svg class="ab" style="left:2040px;top:454px" width="17" height="17" viewBox="0 0 17 17">
<circle cx="8.5" cy="8.5" r="8.3" fill="#000"/>
<circle cx="10.2" cy="4.4" r="1.35" fill="#fff"/>
<path d="M9.6 7.4 L7.9 12.4 Q7.6 13.6 9.3 12.7" fill="none" stroke="#fff" stroke-width="1.9" stroke-linecap="round" stroke-linejoin="round"/></svg>
<div class="t" style="left:2063px;top:448.8px;font-size:18.67px;line-height:28px;color:#303133;font-weight:normal;">在 [高级设置 &gt; 方法] 中编写规则代码</div>
<div class="ab" style="left:2116px;top:71px;width:500px;height:170px;border:6px solid #ff1e1e;border-radius:7px"></div>
<div class="ab" style="left:2154px;top:100.5px;width:438px;height:132px;background:#fff;border:1px solid #ebeef5;border-radius:10px;box-shadow:0 3px 16px rgba(0,0,0,.11)"></div>
<svg class="ab" style="left:2173px;top:122px" width="28" height="28" viewBox="0 0 28 28">
<circle cx="14" cy="14" r="14" fill="#67c23a"/>
<path d="M8 14.5 L12.3 18.5 L20 10.5" fill="none" stroke="#fff" stroke-width="2.0" stroke-linecap="round" stroke-linejoin="round"/></svg>
<div class="t" style="left:2220px;top:120.6px;font-size:21.33px;line-height:32px;color:#303133;font-weight:bold;">提示</div>
<svg class="ab" style="left:2554px;top:129px" width="14" height="13" viewBox="0 0 14 13"><path d="M1 0.5 L13 12.5 M13 0.5 L1 12.5" stroke="#909399" stroke-width="1.4"/></svg>
<div class="t" style="left:2220px;top:158.6px;font-size:18.67px;line-height:28px;color:#606266;font-weight:normal;letter-spacing:0.38px">添加方法[ isCheckedRows ]成功, 请在</div>
<div class="t" style="left:2220px;top:186.1px;font-size:18.67px;line-height:28px;color:#606266;font-weight:normal;">[高级设置 &gt; 方法] 中编写规则代码</div>
<div class="ab" style="left:29px;top:1290px;width:2586px;height:1px;background:#c8c8c8"></div>
<div class="ab" style="left:0px;top:1323px;width:2644px;height:1px;background:#a0a0a0"></div>
<div class="ab" style="left:0px;top:1355px;width:2644px;height:1px;background:#a0a0a0"></div>
<div class="ab" style="left:-1px;top:1300px;width:40px;height:57px;border-left:1px solid #222;border-bottom:1px solid #a0a0a0;border-bottom-left-radius:15px;clip-path:inset(41px 0 0 0)"></div>
<div class="ab" style="left:2605px;top:1300px;width:40px;height:57px;border-right:1px solid #888;border-bottom:1px solid #a0a0a0;border-bottom-right-radius:15px;clip-path:inset(41px 0 0 0)"></div>
<div class="t" style="left:71px;top:1295.5px;font-size:16px;line-height:24px;color:#000;font-weight:normal;">调试信息</div>
<div class="t" style="left:194px;top:1295.5px;font-size:16px;line-height:24px;color:#000;font-weight:normal;">问题</div>
<svg class="ab" style="left:40px;top:1284px" width="32" height="40" viewBox="0 0 1057 1321">
<g fill="none" stroke="#555" stroke-width="48" stroke-linecap="round">
<path d="M300,630 Q440,470 580,630"/>
<path d="M255,650 H625"/>
<path d="M150,680 L250,715 M740,680 L640,715"/>
<path d="M255,660 Q220,920 400,1045"/>
<path d="M150,990 L240,925"/>
<path d="M420,660 V800 M610,660 V770"/>
</g>
<g stroke="#555" stroke-width="60">
<path d="M480,855 H740 M480,950 H740 M480,1045 H740"/>
</g></svg>
<svg class="ab" style="left:163px;top:1301px" width="19" height="14" viewBox="0 0 19 14">
<rect x="0" y="0.3" width="2.8" height="2.6" fill="#555"/><rect x="4.5" y="0.3" width="14" height="2.6" fill="#555"/>
<rect x="0" y="5.8" width="2.8" height="2.6" fill="#555"/><rect x="4.5" y="5.8" width="14" height="2.6" fill="#555"/>
<rect x="0" y="11.2" width="2.8" height="2.6" fill="#555"/><rect x="4.5" y="11.2" width="14" height="2.6" fill="#555"/></svg>
<div class="t" style="left:27px;top:1327.5px;font-size:16px;line-height:24px;color:#000;font-weight:normal;">查看资源「建筑工程基本情况汇总表」详情</div>
</body></html>
